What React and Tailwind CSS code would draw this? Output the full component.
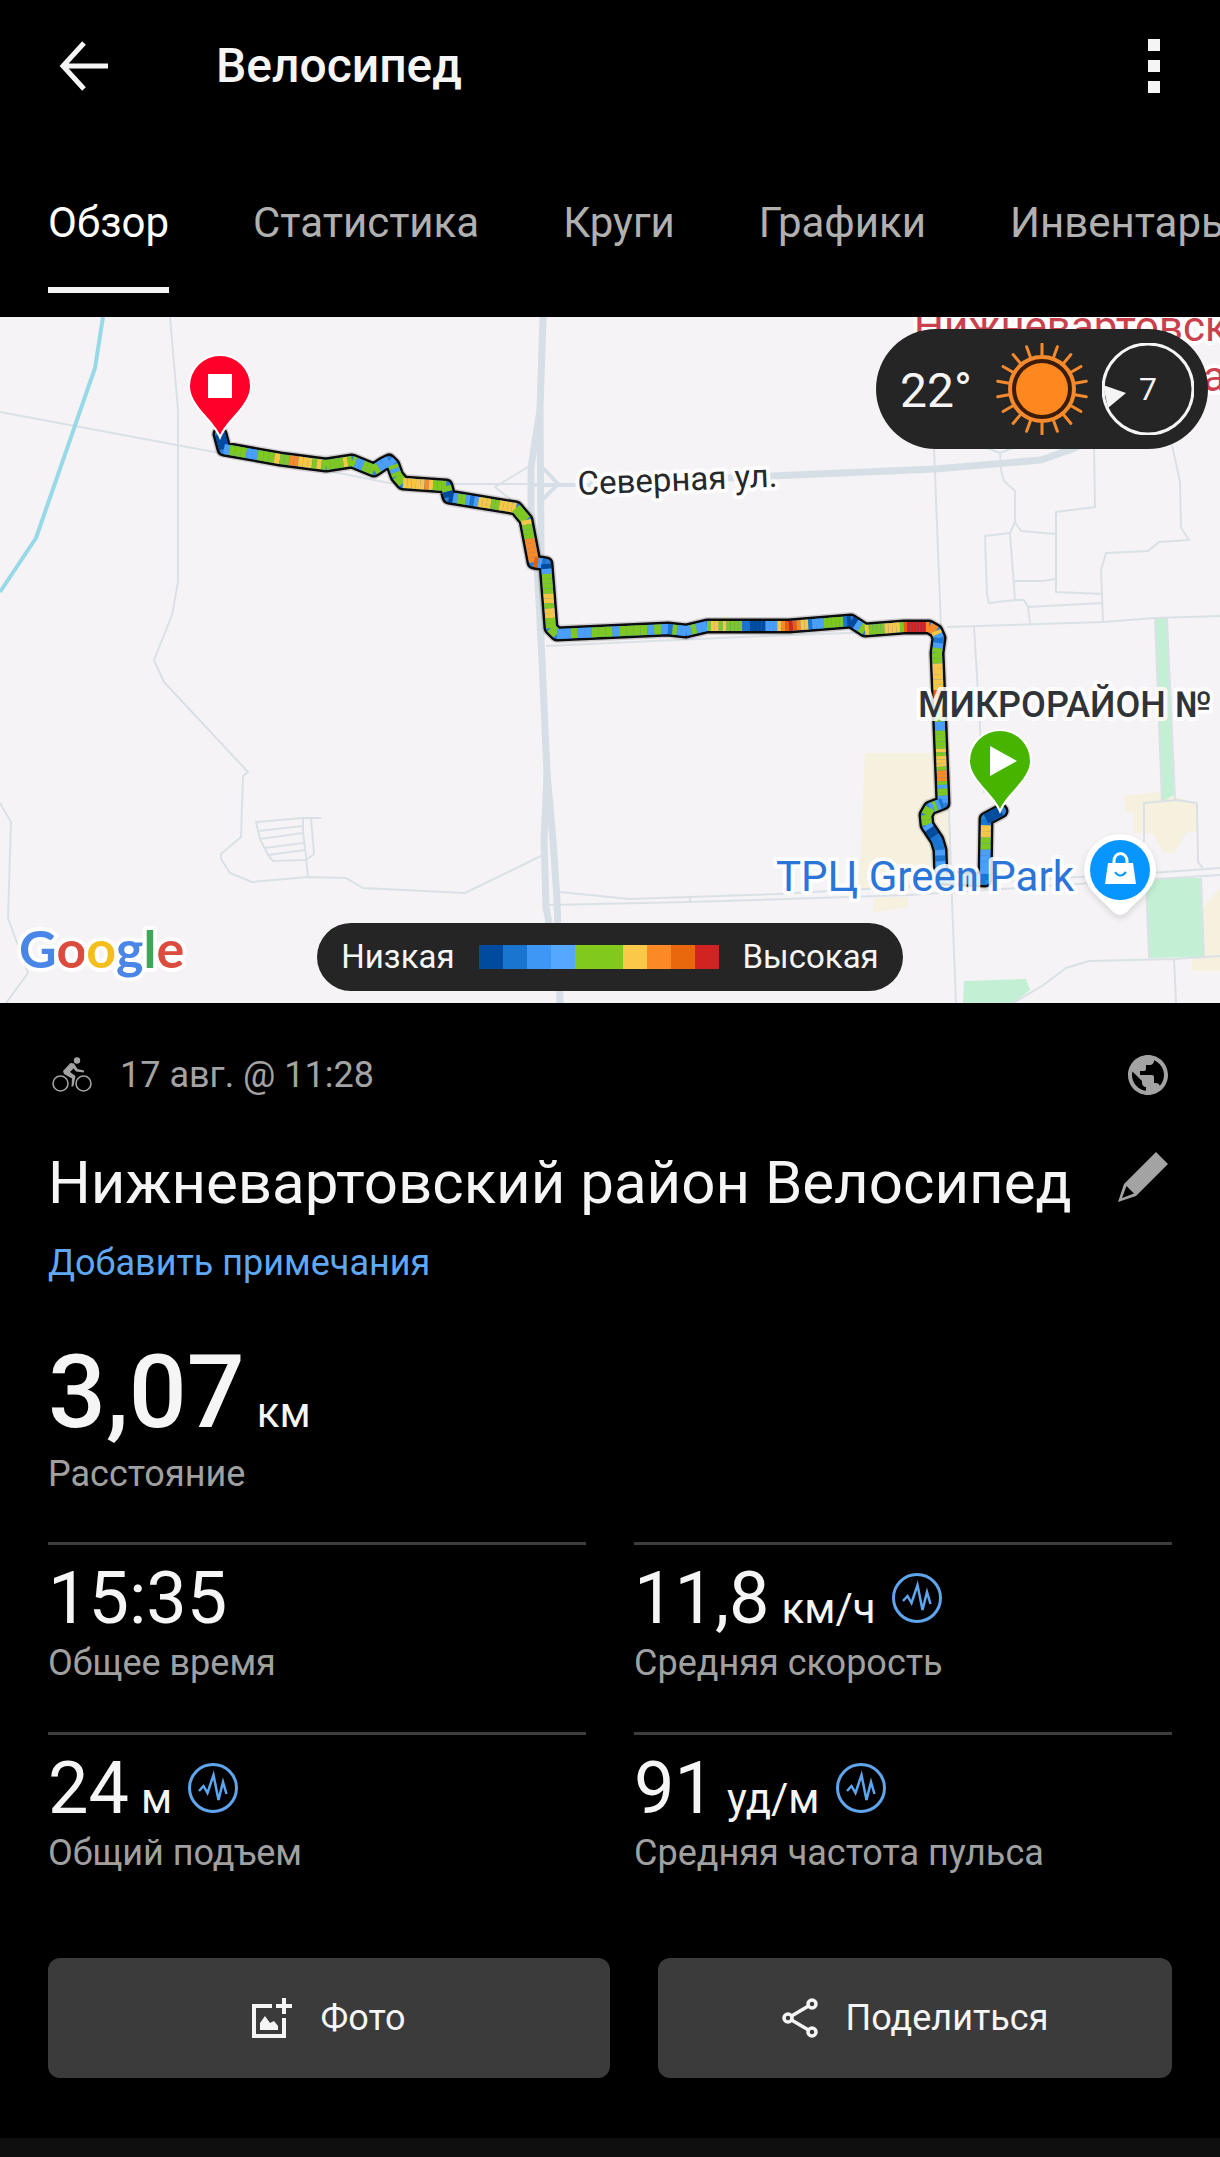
import { useState } from 'react'
import { MdPublic } from 'react-icons/md'

const TABS = ['Обзор', 'Статистика', 'Круги', 'Графики', 'Инвентарь']

const SCALE = ['#004b9e', '#1a75d1', '#3f97f5', '#55a8ff', '#82c91e', '#82c91e', '#fbc94a', '#fa8926', '#e9680e', '#d22323']

const SPEED = {
  n: '#004b9e',
  B: '#1a75d1',
  b: '#4c9ff8',
  g: '#7fc821',
  y: '#f5c744',
  o: '#f98a28',
  d: '#e4600f',
  r: '#d22323',
}

// each leg: end x, end y, speed codes spread evenly along it
const START = [220, 434]
const LEGS = [
  [224, 449, 'n'],
  [280, 459, 'bgggbbgggy'],
  [326, 465, 'ggooyyygyg'],
  [352, 461, 'ggggyg'],
  [374, 470, 'gbbggg'],
  [383, 464, 'gb'],
  [389, 461, 'b'],
  [393, 465, 'b'],
  [397, 476, 'gbg'],
  [403, 483, 'g'],
  [446, 486, 'yyyyyoyggg'],
  [449, 497, 'gn'],
  [516, 508, 'nbggbBbyyyggyyyy'],
  [526, 520, 'g'],
  [534, 562, 'ygggooooo'],
  [546, 564, 'dbB'],
  [551, 628, 'nbggggyygyygg'],
  [557, 634, 'g'],
  [668, 629, 'bbgbbgggbggggbgb'],
  [686, 631, 'Bgbb'],
  [707, 626, 'bgbb'],
  [789, 626, 'gyygyggggBBnnnnbbbyod'],
  [851, 621, 'rdoyyBbbbgggggBn'],
  [865, 630, 'nbg'],
  [904, 627, 'yggggyyyyg'],
  [929, 627, 'drrrrrro'],
  [936, 631, 'o'],
  [939, 638, 'yb'],
  [937, 653, 'Bbg'],
  [940, 727, 'ggyyyyydoygggb'],
  [943, 803, 'bgggggygyyygooogbggbb'],
  [930, 808, 'Bbgb'],
  [926, 815, 'g'],
  [927, 825, 'gg'],
  [937, 840, 'bnnB'],
  [940, 850, 'B'],
  [941, 878, 'bBbbb'],
  [985, 880, 'bB'],
  [986, 819, 'BbbbbggyyB'],
  [1001, 811, 'nn'],
]

const MINOR_ROADS = [
  'M170 317L178 410V582L172 615L154 660L164 682L248 772L243 776L241 837L221 854V859L230 873L252 882L308 877L346 878L363 888L465 893L541 856',
  'M0 412L214 452L339 473L389 483L455 484H533',
  'M528 467L495 487L510 499',
  'M934 448L941 627',
  'M987 448L1000 453L1013 448M1000 453L1001 470L1004 481L1015 491V522L1010 533L1015 600',
  'M1015 522L1021 531L1056 534',
  'M1010 533L985 536L987 595L989 603L1015 600H1024L1028 607L1030 623M1028 607L1103 603',
  'M1014 581H1042L1056 579',
  'M1094 448L1095 507L1056 512V592L1103 594',
  'M1172 445L1180 482L1181 528L1189 540L1159 542L1148 551L1106 553L1101 570L1103 622',
  'M947 627L1103 622L1155 618L1220 616',
  'M974 626L976 660L984 793',
  'M546 646L610 643L766 636L929 630',
  'M949 810L952 900L956 1003',
  'M0 803L11 822L8 918L28 973L6 1003',
  'M321 818H303L256 822L260 839L268 855L273 861L306 860L314 854L311 818',
  'M303 818V833L305 847L308 877M258 831L303 826M260 839L303 833M264 848L304 843M268 855L305 850',
  'M560 892L610 897L629 899L777 894L1151 873L1220 868',
  'M549 905L690 902L910 895L1155 879L1220 875M690 897V902',
  'M1155 618L1162 802M1167 618L1175 800',
  'M1013 1003L1042 986L1066 968L1089 961L1174 959L1220 956M1174 959L1176 1003',
  'M1144 842V803L1176 800L1197 803L1198 862L1203 868M1146 878L1149 958M1201 878L1204 957',
]

const MAJOR_ROADS = [
  'M543 317L540 410L541 543V640',
  'M540 410L531 467V510L537 563L542 660L547 773L544 840L546 907L549 923L556 960',
  'M547 773L553 840L557 900L560 1003',
]

function splitRoute() {
  const pieces = []
  let [x, y] = START
  LEGS.forEach(([tx, ty, codes]) => {
    const n = codes.length
    codes.split('').forEach((code, i) => {
      pieces.push({
        x1: x + ((tx - x) * i) / n,
        y1: y + ((ty - y) * i) / n,
        x2: x + ((tx - x) * (i + 1)) / n,
        y2: y + ((ty - y) * (i + 1)) / n,
        color: SPEED[code],
      })
    })
    x = tx
    y = ty
  })
  return pieces
}

const PIECES = splitRoute()
const OUTLINE = [START, ...LEGS].map(p => `${p[0]},${p[1]}`).join(' ')

function RouteMap() {
  return (
    <svg viewBox="0 317 1220 686" className="block w-full bg-[#f5f3f5] font-[Roboto,sans-serif]" role="img" aria-label="Карта">
      {/* land use */}
      <g fill="#f6f0de">
        <path d="M865 753H933L949 810L952 890H859Z" />
        <path d="M875 898L908 897V907L873 912Z" />
        <path d="M1124 796L1161 792L1197 803L1198 832H1187L1174 853H1164L1153 833H1134L1133 812H1126Z" />
        <path d="M1220 888L1203 907L1205 950L1192 955V971H1220Z" />
      </g>
      <g fill="#c3f0d5">
        <path d="M1155 618H1167L1169 660L1174 795L1162 802L1156 660Z" />
        <path d="M1146 878H1201L1204 957L1149 958Z" />
        <path d="M964 981L1026 979L1030 990L1013 1003H963Z" />
      </g>

      <g fill="none" strokeLinejoin="round">
        <g stroke="#dae1e6" strokeWidth="2">
          {MINOR_ROADS.map(d => <path key={d} d={d} />)}
        </g>
        <path d="M103 317L95 368L36 538L0 592" stroke="#98d9e8" strokeWidth="4" />
        <g stroke="#d7dfe6" strokeWidth="7">
          {MAJOR_ROADS.map(d => <path key={d} d={d} />)}
          <path d="M543 468L558 484L543 499M534 485H590" strokeWidth="4" />
          <path d="M590 484L731 478L771 476L935 469L1041 460L1075 448L1110 430" />
        </g>

        {/* ride track */}
        <polyline points={OUTLINE} stroke="#000" strokeOpacity="0.15" strokeWidth="18" strokeLinecap="round" />
        <polyline points={OUTLINE} stroke="#0c0c0c" strokeWidth="15" strokeLinecap="round" />
        <polyline points={OUTLINE} stroke="#2f80d8" strokeWidth="10" strokeLinecap="round" />
        {PIECES.map((p, i) => (
          <line key={i} x1={p.x1} y1={p.y1} x2={p.x2} y2={p.y2} stroke={p.color} strokeWidth="10" />
        ))}
      </g>

      {/* labels */}
      <g stroke="#fff" strokeOpacity="0.85" strokeWidth="8" strokeLinejoin="round" paintOrder="stroke">
        <text x="578" y="495" fontSize="33" fill="#26282b" transform="rotate(-2.4 578 495)">Северная ул.</text>
        <text x="918" y="717" fontSize="36" fontWeight="500" fill="#303438">МИКРОРАЙОН №</text>
        <text x="776" y="891" fontSize="42" fill="#2b74d8">ТРЦ Green Park</text>
        <text x="914" y="341" fontSize="42" fill="#cb404d">Нижневартовск</text>
        <text x="1203" y="391" fontSize="42" fill="#cb404d">а</text>
        <text x="19" y="968" fontSize="52" fontWeight="700" fontFamily="Lato" fill="#4a86e8">
          G<tspan fill="#db4b3e">o</tspan><tspan fill="#f4bf1c">o</tspan>g<tspan fill="#3fa558">l</tspan><tspan fill="#db4b3e">e</tspan>
        </text>
      </g>

      {/* shop */}
      <path d="M1120 834A36 36 0 0 1 1156 870C1156 889 1138 899 1128 911Q1120 919 1112 911C1102 899 1084 889 1084 870A36 36 0 0 1 1120 834Z"
        fill="#fff" className="drop-shadow-md" />
      <circle cx="1120" cy="870" r="30" fill="#0796ff" />
      <path d="M1108 863H1133L1136 884H1105Z" fill="#fff" />
      <path d="M1114 864V861A6 7 0 0 1 1127 861V864" fill="none" stroke="#fff" strokeWidth="3" />
      <path d="M1115 872Q1120 879 1126 872" fill="none" stroke="#0796ff" strokeWidth="2" />

      {/* finish and start */}
      <path d="M220 435C213 419 190 405 190 386A30 30 0 0 1 250 386C250 405 227 419 220 435Z" fill="#ff0029" stroke="#fff" strokeWidth="4" paintOrder="stroke" />
      <rect x="208" y="374" width="24" height="24" fill="#fff" />
      <path d="M1000 809C993 793 970 779 970 761A30 30 0 0 1 1030 761C1030 779 1007 793 1000 809Z" fill="#47b400" stroke="#fff" strokeWidth="4" paintOrder="stroke" />
      <path d="M990 746L1017 761L990 776Z" fill="#fff" />
    </svg>
  )
}

function SunIcon() {
  return (
    <svg viewBox="0 0 92 92" className="size-[92px]" aria-hidden="true">
      <g stroke="#f58a2c" strokeWidth="3" strokeLinecap="round">
        {Array.from({ length: 18 }, (_, i) => (
          <line key={i} x1="46" y1="1" x2="46" y2="14" transform={`rotate(${i * 20} 46 46)`} />
        ))}
      </g>
      <circle cx="46" cy="46" r="32" fill="#3a1c08" stroke="#f58a2c" strokeWidth="4" />
      <circle cx="46" cy="46" r="26" fill="#ff871f" />
    </svg>
  )
}

function WindIcon() {
  return (
    <svg viewBox="0 0 92 92" className="size-[92px]" aria-hidden="true">
      <circle cx="46" cy="46" r="45" fill="none" stroke="#f5f5f5" strokeWidth="3" />
      <path d="M1 42L24 50L6 65Z" fill="#f5f5f5" />
    </svg>
  )
}

function BikeIcon() {
  return (
    <svg viewBox="0 0 40 36" className="h-9 w-10" fill="none" stroke="currentColor" aria-hidden="true">
      <circle cx="8.500" cy="26.500" r="7.500" strokeWidth="1.600" />
      <circle cx="31.500" cy="26.500" r="7.500" strokeWidth="1.600" />
      <circle cx="25" cy="3.500" r="3.200" fill="currentColor" stroke="none" />
      <path d="M18.500 6L11 14L12 17L20 21.500L19.500 30L21.500 29L23.500 19L18 15L21.500 11.500L24 14.500L32 15.500V13.500L25.500 12L22 6.500Z" fill="currentColor" stroke="none" />
    </svg>
  )
}

function PulseIcon() {
  return (
    <svg viewBox="0 0 50 50" className="ml-4 size-[50px]" fill="none" stroke="#5fa5ee" aria-hidden="true">
      <circle cx="25" cy="25" r="23.500" strokeWidth="3" />
      <path d="M11 28L15.500 23L19.500 30L25.500 12L30.500 37L35 19L38.500 31" strokeWidth="2.500" />
    </svg>
  )
}

function Stat({ value, unit, label, chart }) {
  return (
    <div className="border-t-[3px] border-[#3d3d3d] pt-[14px] pb-[45px]">
      <dd className="flex items-baseline text-[72px] leading-[80px]">
        {value}
        {unit && <span className="ml-3 text-[42px] leading-none">{unit}</span>}
        {chart && <PulseIcon />}
      </dd>
      <dt className="text-[36px] leading-[48px] text-[#a0a0a0]">{label}</dt>
    </div>
  )
}

export default function App() {
  const [tab, setTab] = useState('Обзор')

  return (
    <div className="flex min-h-screen flex-col overflow-hidden bg-black font-[Roboto,sans-serif] text-[#f5f5f5]">
      <header className="flex h-[132px] items-center px-12">
        <button aria-label="Назад" className="ml-2">
          <svg viewBox="0 0 60 52" className="h-[52px] w-[60px]" fill="none" stroke="currentColor" strokeWidth="5">
            <path d="M28 3L7 26L28 49M7 26H52" />
          </svg>
        </button>
        <h1 className="ml-[100px] text-[48px] leading-[56px] font-medium">Велосипед</h1>
        <button aria-label="Меню" className="mr-3 ml-auto flex flex-col gap-[9px]">
          <span className="size-3 bg-current" />
          <span className="size-3 bg-current" />
          <span className="size-3 bg-current" />
        </button>
      </header>

      <nav className="flex gap-[84px] px-12 pt-16 pb-6">
        {TABS.map(name => (
          <button
            key={name}
            onClick={() => setTab(name)}
            className={`shrink-0 border-b-[6px] pb-[38px] text-[42px] leading-[53px] ${
              name === tab ? 'border-[#f5f5f5] text-white' : 'border-transparent text-[#b0b0b0]'
            }`}
          >
            {name}
          </button>
        ))}
      </nav>

      <div className="relative">
        <RouteMap />
        <div className="absolute top-3 right-3 flex h-[120px] items-center rounded-full bg-[#252525] pr-[14px] pl-6">
          <span className="mr-6 pt-1 text-[48px]">22°</span>
          <SunIcon />
          <div className="relative ml-[14px]">
            <WindIcon />
            <span className="absolute inset-0 flex items-center justify-center text-[32px]">7</span>
          </div>
        </div>
        <div className="absolute inset-x-0 bottom-3 flex justify-center">
          <div className="flex h-[68px] items-center gap-6 rounded-full bg-[#252525] px-6 text-[33px]">
            <span>Низкая</span>
            <div className="flex">
              {SCALE.map((color, i) => (
                <span key={i} className="size-6" style={{ backgroundColor: color }} />
              ))}
            </div>
            <span>Высокая</span>
          </div>
        </div>
      </div>

      <main className="px-12 pt-12 pb-[60px]">
        <div className="flex h-12 items-center text-[#a3a3a3]">
          <span className="ml-1"><BikeIcon /></span>
          <span className="ml-7 text-[36px] leading-[48px]">17 авг. @ 11:28</span>
          <MdPublic className="ml-auto size-12" />
        </div>

        <div className="mt-12 flex items-center justify-between">
          <h2 className="text-[60px] leading-[72px]">Нижневартовский район Велосипед</h2>
          <button aria-label="Изменить" className="mr-1 pb-3 text-[#a3a3a3]">
            <svg viewBox="0 0 50 50" className="size-[50px]" fill="currentColor">
              <path fillRule="evenodd" d="M38 0L50 12L18 44L0 50L6 32ZM8.500 34L4 46L16 41.500Z" />
            </svg>
          </button>
        </div>
        <a href="#notes" className="mt-5 block w-fit text-[36px] leading-[48px] text-[#5fa8f5]">Добавить примечания</a>

        <dl className="mt-12">
          <dd className="flex items-baseline text-[102px] leading-[115px] font-medium">
            3,07 <span className="ml-3 text-[42px] leading-none font-normal">км</span>
          </dd>
          <dt className="text-[36px] leading-[48px] text-[#a0a0a0]">Расстояние</dt>
        </dl>

        <dl className="mt-11 grid grid-cols-2 gap-x-12">
          <Stat value="15:35" label="Общее время" />
          <Stat value="11,8" unit="км/ч" label="Средняя скорость" chart />
          <Stat value="24" unit="м" label="Общий подъем" chart />
          <Stat value="91" unit="уд/м" label="Средняя частота пульса" chart />
        </dl>

        <div className="mt-9 grid grid-cols-[562fr_514fr] gap-12">
          <button className="flex h-[120px] items-center justify-center gap-7 rounded-xl bg-[#3b3b3b] text-[36px]">
            <svg viewBox="0 0 40 40" className="size-10" fill="none" stroke="currentColor" strokeWidth="4" aria-hidden="true">
              <path d="M20 8H2V38H32V20M32 0V16M24 8H40" />
              <path d="M8 32V25L13 18L18 25L22 23L26 28V32Z" fill="currentColor" stroke="none" />
            </svg>
            Фото
          </button>
          <button className="flex h-[120px] items-center justify-center gap-7 rounded-xl bg-[#3b3b3b] text-[36px]">
            <svg viewBox="0 0 36 40" className="h-10 w-9" fill="none" stroke="currentColor" strokeWidth="3.500" aria-hidden="true">
              <circle cx="6" cy="20" r="4" />
              <circle cx="30" cy="6" r="4" />
              <circle cx="30" cy="34" r="4" />
              <path d="M9.500 18L26.500 8M9.500 22L26.500 32" />
            </svg>
            Поделиться
          </button>
        </div>
      </main>
      <div className="flex-1 bg-[#0f0f0f]" />
    </div>
  )
}
